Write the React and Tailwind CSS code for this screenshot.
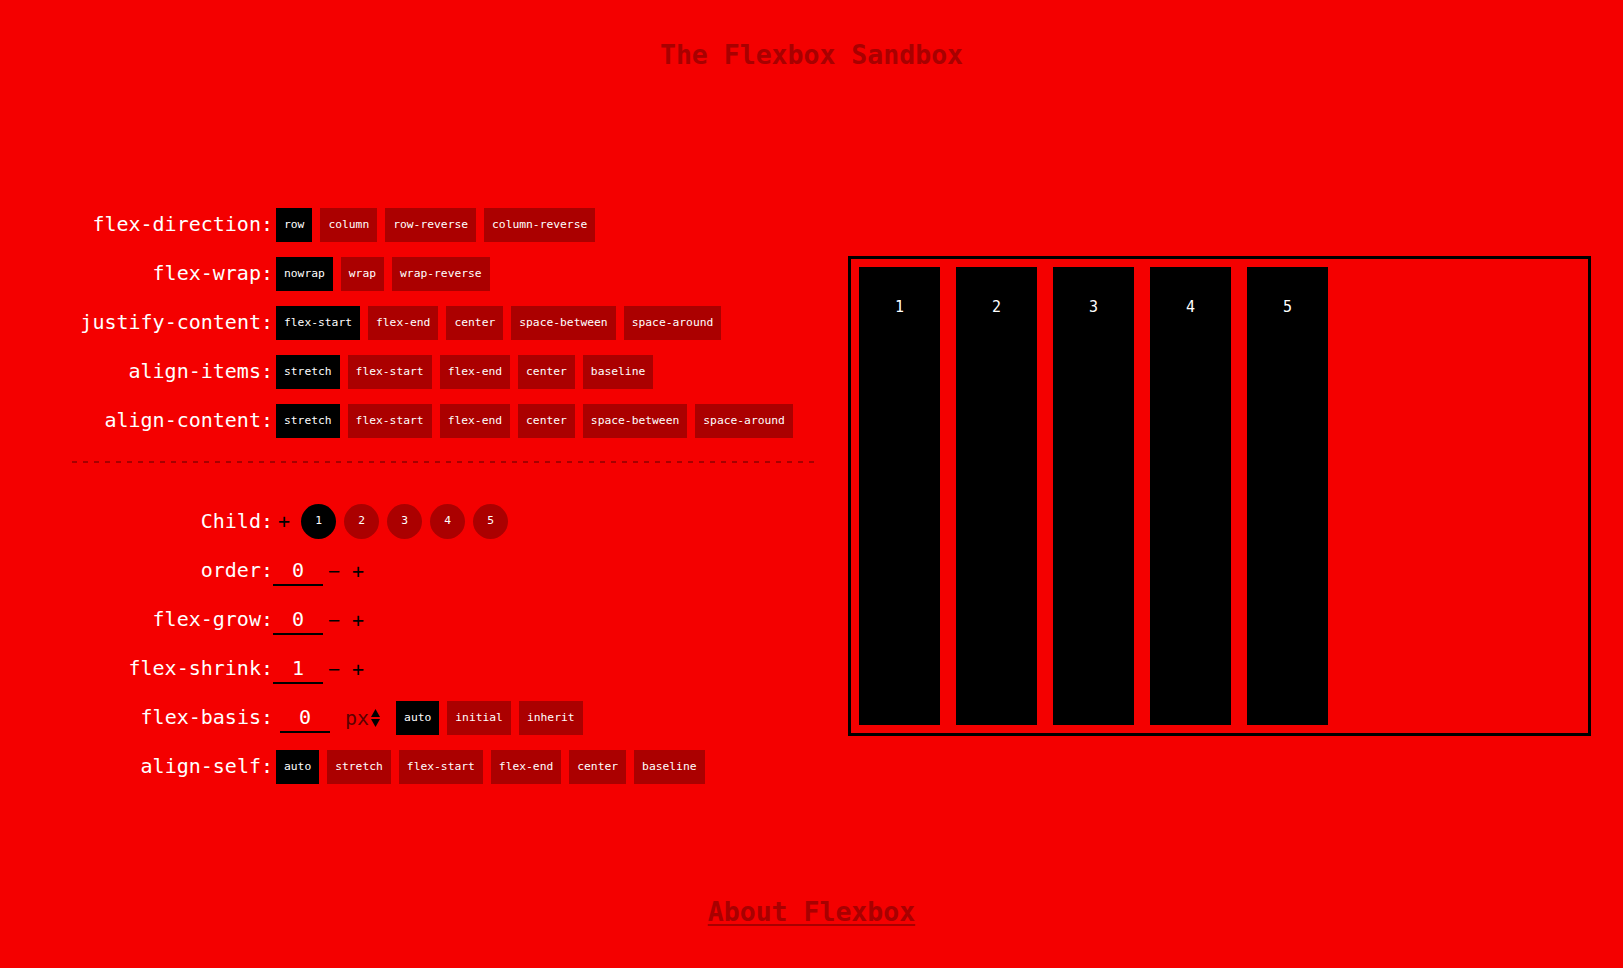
import React from "react";

const rows1 = [
  { label: "flex-direction:", opts: ["row", "column", "row-reverse", "column-reverse"] },
  { label: "flex-wrap:", opts: ["nowrap", "wrap", "wrap-reverse"] },
  { label: "justify-content:", opts: ["flex-start", "flex-end", "center", "space-between", "space-around"] },
  { label: "align-items:", opts: ["stretch", "flex-start", "flex-end", "center", "baseline"] },
  { label: "align-content:", opts: ["stretch", "flex-start", "flex-end", "center", "space-between", "space-around"] },
];

function Btn({ children, active }) {
  return (
    <div
      className={
        "h-[34px] px-2 flex items-center text-[11.3px] leading-none text-white whitespace-nowrap " +
        (active ? "bg-black" : "bg-[#ab0000]")
      }
    >
      {children}
    </div>
  );
}

function Label({ children }) {
  return (
    <div className="w-[201px] shrink-0 pb-[2px] text-right text-[20px] leading-[24px] text-white whitespace-nowrap">
      {children}
    </div>
  );
}

function Row({ children }) {
  return <div className="h-[49px] flex items-center">{children}</div>;
}

function NumInput({ value, ml, h }) {
  return (
    <div
      className={
        "w-[50px] border-b-2 border-black flex items-center justify-center text-[20px] leading-[24px] text-white " +
        ml +
        " " +
        h
      }
    >
      {value}
    </div>
  );
}

function PlusMinus() {
  return (
    <div className="flex items-center text-[20px] leading-[24px] text-black">
      <span className="ml-[5px]">−</span>
      <span className="ml-[12px]">+</span>
    </div>
  );
}

export default function App() {
  return (
    <div className="min-h-[968px] w-full bg-[#f40000] font-['DejaVu_Sans_Mono',monospace] overflow-hidden">
      <h1 className="pt-[38px] text-center text-[26.5px] leading-[34px] font-bold text-[#a80000]">
        The Flexbox Sandbox
      </h1>

      <main className="mt-[128px] flex items-center pl-[72px]">
        <div className="w-[737px] shrink-0">
          {rows1.map((r) => (
            <Row key={r.label}>
              <Label>{r.label}</Label>
              <div className="ml-[3px] flex gap-2">
                {r.opts.map((o, i) => (
                  <Btn key={o} active={i === 0}>
                    {o}
                  </Btn>
                ))}
              </div>
            </Row>
          ))}

          <div className="mt-4 mb-[34px] w-[742px] h-[2px] bg-[repeating-linear-gradient(to_right,#a60000_0px,#a60000_5px,transparent_5px,transparent_11px)]" />

          <Row>
            <Label>Child:</Label>
            <span className="ml-[5px] pb-[2px] text-[20px] leading-[24px] text-black">+</span>
            <div className="ml-[11px] flex gap-2">
              {[1, 2, 3, 4, 5].map((n) => (
                <div
                  key={n}
                  className={
                    "w-[35px] h-[35px] rounded-full flex items-center justify-center text-[11.3px] text-white " +
                    (n === 1 ? "bg-black" : "bg-[#ab0000]")
                  }
                >
                  {n}
                </div>
              ))}
            </div>
          </Row>

          <Row>
            <Label>order:</Label>
            <NumInput value="0" ml="ml-0" h="h-[31px]" />
            <PlusMinus />
          </Row>

          <Row>
            <Label>flex-grow:</Label>
            <NumInput value="0" ml="ml-0" h="h-[31px]" />
            <PlusMinus />
          </Row>

          <Row>
            <Label>flex-shrink:</Label>
            <NumInput value="1" ml="ml-0" h="h-[31px]" />
            <PlusMinus />
          </Row>

          <Row>
            <Label>flex-basis:</Label>
            <NumInput value="0" ml="ml-[7px]" h="h-[30px]" />
            <span className="ml-[15px] text-[20px] leading-[24px] text-[#5c0000]">px</span>
            <svg className="ml-[2px]" width="9" height="18" viewBox="0 0 9 18">
              <polygon points="0,8 4.5,0 9,8" fill="#000" />
              <polygon points="0,10 9,10 4.5,18" fill="#000" />
            </svg>
            <div className="ml-[16px] flex gap-2">
              <Btn active>auto</Btn>
              <Btn>initial</Btn>
              <Btn>inherit</Btn>
            </div>
          </Row>

          <Row>
            <Label>align-self:</Label>
            <div className="ml-[3px] flex gap-2">
              {["auto", "stretch", "flex-start", "flex-end", "center", "baseline"].map((o, i) => (
                <Btn key={o} active={i === 0}>
                  {o}
                </Btn>
              ))}
            </div>
          </Row>
        </div>

        <div className="ml-[39px] w-[743px] h-[480px] shrink-0 border-[3px] border-black flex">
          {[1, 2, 3, 4, 5].map((n) => (
            <div
              key={n}
              className="m-2 w-[81px] shrink-0 bg-black pt-[31px] text-center text-[15px] leading-[18px] text-white"
            >
              {n}
            </div>
          ))}
        </div>
      </main>

      <footer className="mt-[104px] text-center">
        <a
          href="#"
          className="text-[26.5px] leading-[34px] font-bold text-[#a80000] underline decoration-2 underline-offset-[3px]"
        >
          About Flexbox
        </a>
      </footer>
    </div>
  );
}
